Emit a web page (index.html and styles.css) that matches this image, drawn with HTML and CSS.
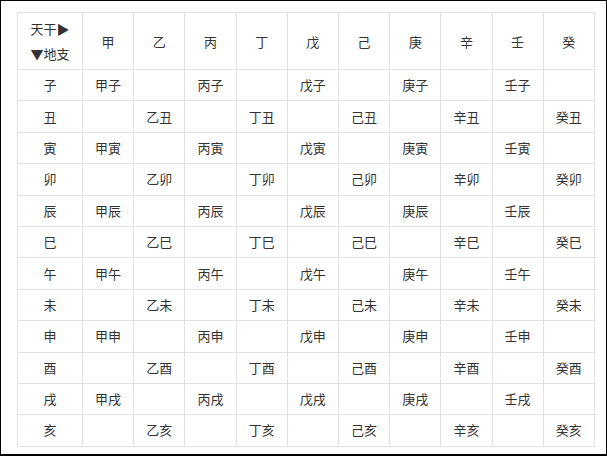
FILE: index.html
```html
<!DOCTYPE html>
<html lang="zh">
<head>
<meta charset="utf-8">
<link rel="stylesheet" href="styles.css">
</head>
<body>
<div class="frame">
<table class="ganzhi">
<thead>
<tr><th class="corner"><span class="line">天干▶</span><span class="line">▼地支</span></th><th>甲</th><th>乙</th><th>丙</th><th>丁</th><th>戊</th><th>己</th><th>庚</th><th>辛</th><th>壬</th><th>癸</th></tr>
</thead>
<tbody>
<tr><td class="zhi">子</td><td>甲子</td><td></td><td>丙子</td><td></td><td>戊子</td><td></td><td>庚子</td><td></td><td>壬子</td><td></td></tr>
<tr><td class="zhi">丑</td><td></td><td>乙丑</td><td></td><td>丁丑</td><td></td><td>己丑</td><td></td><td>辛丑</td><td></td><td>癸丑</td></tr>
<tr><td class="zhi">寅</td><td>甲寅</td><td></td><td>丙寅</td><td></td><td>戊寅</td><td></td><td>庚寅</td><td></td><td>壬寅</td><td></td></tr>
<tr><td class="zhi">卯</td><td></td><td>乙卯</td><td></td><td>丁卯</td><td></td><td>己卯</td><td></td><td>辛卯</td><td></td><td>癸卯</td></tr>
<tr><td class="zhi">辰</td><td>甲辰</td><td></td><td>丙辰</td><td></td><td>戊辰</td><td></td><td>庚辰</td><td></td><td>壬辰</td><td></td></tr>
<tr><td class="zhi">巳</td><td></td><td>乙巳</td><td></td><td>丁巳</td><td></td><td>己巳</td><td></td><td>辛巳</td><td></td><td>癸巳</td></tr>
<tr><td class="zhi">午</td><td>甲午</td><td></td><td>丙午</td><td></td><td>戊午</td><td></td><td>庚午</td><td></td><td>壬午</td><td></td></tr>
<tr><td class="zhi">未</td><td></td><td>乙未</td><td></td><td>丁未</td><td></td><td>己未</td><td></td><td>辛未</td><td></td><td>癸未</td></tr>
<tr><td class="zhi">申</td><td>甲申</td><td></td><td>丙申</td><td></td><td>戊申</td><td></td><td>庚申</td><td></td><td>壬申</td><td></td></tr>
<tr><td class="zhi">酉</td><td></td><td>乙酉</td><td></td><td>丁酉</td><td></td><td>己酉</td><td></td><td>辛酉</td><td></td><td>癸酉</td></tr>
<tr><td class="zhi">戌</td><td>甲戌</td><td></td><td>丙戌</td><td></td><td>戊戌</td><td></td><td>庚戌</td><td></td><td>壬戌</td><td></td></tr>
<tr><td class="zhi">亥</td><td></td><td>乙亥</td><td></td><td>丁亥</td><td></td><td>己亥</td><td></td><td>辛亥</td><td></td><td>癸亥</td></tr>
</tbody>
</table>
</div>
</body>
</html>
```

FILE: styles.css
```css
html, body {
  margin: 0;
  padding: 0;
  background: #fff;
}
.frame {
  box-sizing: border-box;
  width: 607px;
  height: 456px;
  border: 1px solid #000;
  border-bottom-width: 2px;
  padding: 11px 0 0 16px;
  font-family: "Noto Sans CJK SC", "Liberation Sans", sans-serif;
  font-size: 13px;
  color: #333;
}
.ganzhi {
  border-collapse: collapse;
  table-layout: fixed;
  width: 578px;
}
.ganzhi th,
.ganzhi td {
  border: 1px solid #e2e2e2;
  padding: 0;
  text-align: center;
  vertical-align: middle;
  font-weight: normal;
}
.ganzhi thead th {
  height: 56px;
}
.ganzhi thead th.corner {
  width: 64px;
}
.corner .line {
  display: block;
  line-height: 25px;
}
.ganzhi tbody td {
  height: 30.4px;
  line-height: 16px;
}
```
